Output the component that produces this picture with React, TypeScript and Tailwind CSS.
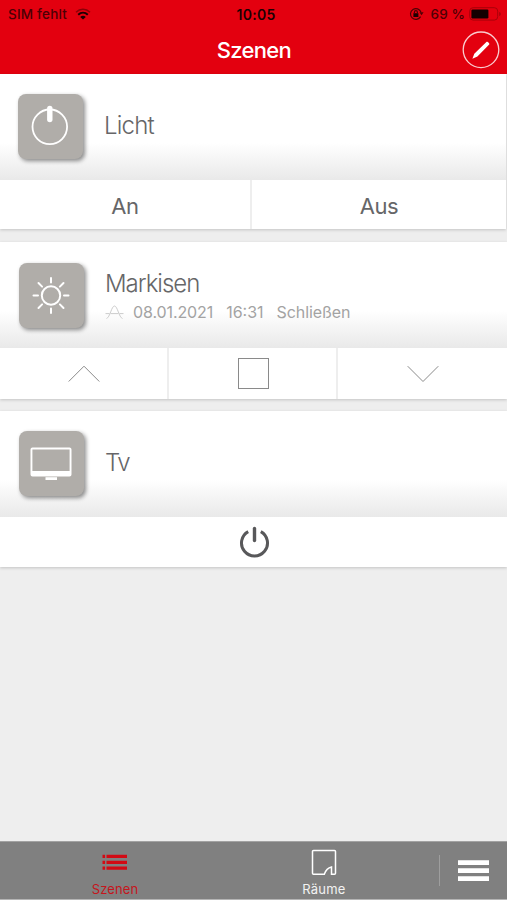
import type { ReactNode } from "react";

interface SceneCardProps {
  icon: ReactNode;
  title: string;
  info?: ReactNode;
  className?: string;
  bodyClass?: string;
  titleClass?: string;
  children: ReactNode;
}

const StatusBar = () => {
  return (
    <div className="h-7 grid grid-cols-3 items-center pl-2 pr-1.5 text-[#4c0005] text-[13.5px] font-medium">
      <div className="flex items-center gap-2">
        <span className="tracking-[0.2px]">SIM fehlt</span>
        <svg width="16" height="12" viewBox="0 0 16 12" fill="none">
          <path d="M1 4.2C5 .3 11 .3 15 4.2" stroke="#8c0008" strokeWidth="1.5" />
          <path d="M3.2 6.7C6 4 10 4 12.8 6.7" stroke="#1c0002" strokeWidth="2" />
          <path d="M5.2 8.9C7 7.4 9 7.4 10.8 8.9L8 11.6Z" fill="#1c0002" />
        </svg>
      </div>
      <span className="pl-[3px] text-center font-semibold text-[#1c0002] text-[14px] tracking-[0.3px]">10:05</span>
      <div className="flex items-center justify-end">
        <svg width="15" height="14" viewBox="0 0 15 14" fill="none" stroke="#4c0005" strokeWidth="1.2">
          <path d="M11.6 9.6A5.4 5.4 0 1 1 12 5.2" />
          <path d="M10.4 5.2h4.2l-2.1 3z" fill="#4c0005" stroke="none" />
          <rect x="4.4" y="6.2" width="5" height="3.8" fill="#1c0002" stroke="none" />
          <path d="M5.4 6.4V5.2a1.5 1.5 0 0 1 3 0v1.2" />
        </svg>
        <span className="ml-[7px] tracking-[0.1px]">69 %</span>
        <svg className="ml-1" width="32" height="14" viewBox="0 0 32 14" fill="none">
          <rect x="0.7" y="0.7" width="28" height="12.4" rx="3.4" stroke="#a80009" />
          <rect x="2.4" y="2.6" width="17" height="8.8" rx="1.2" fill="#140001" />
          <path d="M30.2 5v4c1.2-.4 1.5-1 1.5-2s-.3-1.6-1.5-2z" fill="#a80009" />
        </svg>
      </div>
    </div>
  );
};

const Header = () => {
  return (
    <header className="h-[74px] shrink-0 bg-[#e3000f]">
      <StatusBar />
      <div className="h-[44px] grid grid-cols-[45px_1fr_45px] items-center">
        <span />
        <h1 className="pl-px text-center text-white text-[22px] font-medium tracking-[-0.7px]">Szenen</h1>
        <button>
          <svg width="38" height="38" viewBox="0 0 38 38">
            <circle cx="19" cy="18.8" r="17.8" fill="none" stroke="#fff" strokeOpacity="0.8" strokeWidth="1.3" />
            <path d="M24.4 10.9c.9-.9 3.7 1.7 2.8 2.7L15.4 25.500l-5 2.200 1.900-5z" fill="#fff" />
          </svg>
        </button>
      </div>
    </header>
  );
};

const SceneCard = ({
  icon,
  title,
  info,
  className = "",
  bodyClass = "pl-[19px]",
  titleClass = "tracking-[-0.9px]",
  children,
}: SceneCardProps) => {
  return (
    <section className={`bg-white shadow-[0_1px_3px_rgba(0,0,0,0.18)] ${className}`}>
      <div className={`h-[106px] flex items-center bg-linear-to-b from-white from-65% to-[#e9e9e9] ${bodyClass}`}>
        <div className="size-[65px] shrink-0 rounded-[8px] bg-[#b0ada9] shadow-[2px_2px_4px_rgba(0,0,0,0.45)] flex items-center justify-center">
          {icon}
        </div>
        <div className="ml-[21px]">
          <h2 className={`text-[24px] leading-[30px] font-light text-[#666668] ${titleClass}`}>{title}</h2>
          {info}
        </div>
      </div>
      {children}
    </section>
  );
};

const LightIcon = () => (
  <svg width="65" height="65" viewBox="0 0 65 65" fill="none" stroke="#fff">
    <circle cx="31.8" cy="32.8" r="17.3" strokeWidth="1.8" />
    <path d="M31.8 14.5v11" strokeWidth="5.4" strokeLinecap="round" />
  </svg>
);

const SunIcon = () => (
  <svg width="65" height="65" viewBox="0 0 65 65" fill="none" stroke="#fff" strokeWidth="2" strokeLinecap="round">
    <circle cx="32" cy="32.5" r="9.2" />
    <path d="M32 15v4.5M32 45.5V50M14.5 32.5H19M45 32.5h4.5M19.5 20l3.6 3.6M40.9 41.4l3.6 3.6M44.5 20l-3.6 3.6M23.1 41.4l-3.6 3.6" />
  </svg>
);

const TvIcon = () => (
  <svg width="65" height="65" viewBox="0 0 65 65">
    <path d="M13.5 16.500h37a2 2 0 0 1 2 2v25a2 2 0 0 1-2 2h-37a2 2 0 0 1-2-2v-25a2 2 0 0 1 2-2zM13.4 18.500v21.500h37.200V18.500z" fill="#fff" fillRule="evenodd" />
    <path d="M26.5 46.200H38v2.800H26.500z" fill="#fff" />
  </svg>
);

const TabBar = () => {
  return (
    <nav className="mt-auto h-[59px] shrink-0 flex bg-[#808080] border-t border-t-[#a2a2a2] border-b border-b-[#b5b5b5] text-[13px] leading-4">
      <button className="w-[229px] flex flex-col items-center text-[#c5161d]">
        <svg className="mt-[12px]" width="26" height="18" viewBox="0 0 26 18" fill="#d20a14">
          <path d="M.5.700h2.600v3.200H.5zM4.500.700H25v3.200H4.500zM.5 6.700h2.600v3.200H.5zM4.500 6.700H25v3.200H4.500zM.5 12.600h2.600v3.200H.5zM4.500 12.600H25v3.200H4.500z" />
        </svg>
        <span className="mt-[9px] pl-px tracking-[0.1px]">Szenen</span>
      </button>
      <button className="w-[190px] flex flex-col items-center text-[#f2f2f2]">
        <svg className="mt-[7px]" width="26" height="27" viewBox="0 0 26 27" fill="none" stroke="#fff" strokeWidth="1.5">
          <path d="M13.3 25.2H2.5a1 1 0 0 1-1-1V2.500a1 1 0 0 1 1-1h21a1 1 0 0 1 1 1v21.700a1 1 0 0 1-1 1h-3V18c-3.500.8-5.800 3.200-7.200 7.200z" />
        </svg>
        <span className="mt-[5px] tracking-[0.2px]">Räume</span>
      </button>
      <button className="flex items-center">
        <span className="ml-[20px] w-px h-[31px] bg-[#9e9e9e]" />
        <svg className="ml-[18px]" width="32" height="22" viewBox="0 0 32 22" fill="#fff">
          <path d="M0 .3h31V5H0zM0 8.300h31V13H0zM0 16.300h31V21H0z" />
        </svg>
      </button>
    </nav>
  );
};

const App = () => {
  return (
    <div className="h-[900px] w-full flex flex-col bg-[#eeeeee] font-[Inter,sans-serif] overflow-hidden">
      <Header />
      <main>
        <SceneCard
          icon={<LightIcon />}
          title="Licht"
          className="mr-px"
          bodyClass="pl-[18px] pb-[2px]"
          titleClass="tracking-[-0.8px]"
        >
          <div className="h-[49px] grid grid-cols-[252px_1fr] pt-[3px] text-[22px] tracking-[-0.4px] text-[#666668]">
            <button className="-mt-[3px] pt-[3px] border-r-2 border-[#eeeeee]">An</button>
            <button>Aus</button>
          </div>
        </SceneCard>

        <SceneCard
          icon={<SunIcon />}
          title="Markisen"
          className="mt-[13px]"
          titleClass="mt-[3px] tracking-[-1px]"
          info={
            <div className="flex items-center h-[25px] text-[16px] text-[#a3a3a3]">
              <svg width="19" height="14" viewBox="0 0 19 14" fill="none" stroke="#cccccc" strokeWidth="1">
                <path d="M.5 8.600h4M14.500 8.600h4M1.500 13.500c3.500-1 5-12.500 8-12.500s4.500 11.500 8 12.500M5.500 8.600h8" />
              </svg>
              <span className="ml-[9px] tracking-[-0.1px]">08.01.2021</span>
              <span className="ml-[13px]">16:31</span>
              <span className="ml-[13px] tracking-[-0.1px]">Schließen</span>
            </div>
          }
        >
          <div className="h-[51px] grid grid-cols-3">
            <button className="flex items-center justify-center pl-px pt-px border-r-2 border-[#eeeeee]">
              <svg width="32" height="18" viewBox="0 0 32 18" fill="none" stroke="#8a8a8a">
                <path d="M.7 16.500L16 1.200l15.300 15.300" />
              </svg>
            </button>
            <button className="flex items-center justify-center pl-[2px] pt-px border-r-2 border-[#eeeeee]">
              <svg width="32" height="32" viewBox="0 0 32 32" fill="none" stroke="#8a8a8a">
                <rect x="0.5" y="0.5" width="30" height="30" />
              </svg>
            </button>
            <button className="flex items-center justify-center pt-px">
              <svg width="32" height="18" viewBox="0 0 32 18" fill="none" stroke="#8a8a8a">
                <path d="M.7 1.200L16 16.500 31.300 1.200" />
              </svg>
            </button>
          </div>
        </SceneCard>

        <SceneCard
          icon={<TvIcon />}
          title="Tv"
          className="mt-[12px]"
          bodyClass="pl-[19px] pb-[2px]"
          titleClass="tracking-[-1.5px]"
        >
          <div className="h-[50px]">
            <button className="w-full h-full flex items-center justify-center">
              <svg width="32" height="32" viewBox="0 0 32 32" fill="none" stroke="#58585a" strokeWidth="3">
                <path d="M10.2 5.600a13 13 0 1 0 12.600 0" />
                <path d="M16.5 2.500v12" strokeWidth="3.4" strokeLinecap="round" />
              </svg>
            </button>
          </div>
        </SceneCard>
      </main>
      <TabBar />
    </div>
  );
};

export default App;
